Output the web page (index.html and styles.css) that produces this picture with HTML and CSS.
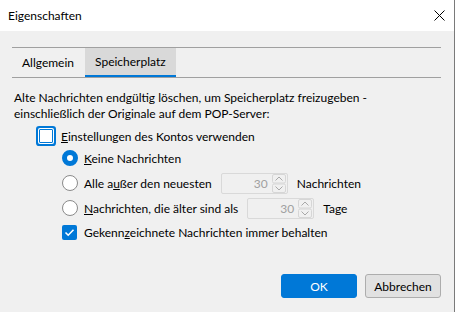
FILE: index.html
```html
<!DOCTYPE html>
<html lang="de">
<head>
    <meta charset="UTF-8">
    <title>Eigenschaften</title>
    <link rel="stylesheet" href="styles.css">
</head>
<body>
    <div class="window">
        <div class="titlebar">
            <span class="title">Eigenschaften</span>
            <svg class="close" width="11" height="11" viewBox="0 0 11 11">
                <path d="M0.5 0.5 L10.5 10.5 M10.5 0.5 L0.5 10.5" stroke="#000" stroke-width="1" fill="none"/>
            </svg>
        </div>

        <div class="content">
            <div class="tabs">
                <div class="tab">Allgemein</div>
                <div class="tab active">Speicherplatz</div>
            </div>

            <p class="desc">Alte Nachrichten endgültig löschen, um Speicherplatz freizugeben -<br>einschließlich der Originale auf dem POP-Server:</p>

            <div class="row main">
                <span class="check focus"></span>
                <span><u>E</u>instellungen des Kontos verwenden</span>
            </div>

            <div class="options">
                <div class="row">
                    <span class="radio on"></span>
                    <span><u>K</u>eine Nachrichten</span>
                </div>
                <div class="row spin-row">
                    <span class="radio"></span>
                    <span>Alle a<u>u</u>ßer den neuesten</span>
                    <span class="spin">
                        <span class="value">30</span>
                        <span class="arrows">
                            <svg width="14" height="19" viewBox="0 0 14 19">
                                <rect x="0.5" y="0.5" width="13" height="8.5" rx="1.5" fill="#f0f0f0" stroke="#d6d6d6"/>
                                <rect x="0.5" y="10" width="13" height="8.5" rx="1.5" fill="#f0f0f0" stroke="#d6d6d6"/>
                                <path d="M3.5 6.5 L7 3 L10.5 6.5" stroke="#a8a8a8" fill="none"/>
                                <path d="M3.5 12.5 L7 16 L10.5 12.5" stroke="#a8a8a8" fill="none"/>
                            </svg>
                        </span>
                    </span>
                    <span>Nachrichten</span>
                </div>
                <div class="row spin-row">
                    <span class="radio"></span>
                    <span><u>N</u>achrichten, die älter sind als</span>
                    <span class="spin">
                        <span class="value">30</span>
                        <span class="arrows">
                            <svg width="14" height="19" viewBox="0 0 14 19">
                                <rect x="0.5" y="0.5" width="13" height="8.5" rx="1.5" fill="#f0f0f0" stroke="#d6d6d6"/>
                                <rect x="0.5" y="10" width="13" height="8.5" rx="1.5" fill="#f0f0f0" stroke="#d6d6d6"/>
                                <path d="M3.5 6.5 L7 3 L10.5 6.5" stroke="#a8a8a8" fill="none"/>
                                <path d="M3.5 12.5 L7 16 L10.5 12.5" stroke="#a8a8a8" fill="none"/>
                            </svg>
                        </span>
                    </span>
                    <span>Tage</span>
                </div>
                <div class="row last">
                    <span class="check on">
                        <svg width="15" height="15" viewBox="0 0 15 15">
                            <path d="M3.5 7.5 L6.2 10.2 L11.5 4.8" stroke="#fff" stroke-width="1.6" fill="none"/>
                        </svg>
                    </span>
                    <span>Gekenn<u>z</u>eichnete Nachrichten immer behalten</span>
                </div>
            </div>

            <div class="buttons">
                <button class="btn primary">OK</button>
                <button class="btn">Abbrechen</button>
            </div>
        </div>
    </div>
</body>
</html>
```

FILE: styles.css
```css
body {
    margin: 0;
    background: #ffffff;
    font-family: Lato, "Noto Sans", sans-serif;
    font-size: 12px;
    color: #000;
}

.window {
    width: 454px;
    height: 312px;
    border-right: 1px solid #7a7a7a;
    display: flex;
    flex-direction: column;
}

.titlebar {
    height: 31px;
    background: #fff;
    display: flex;
    align-items: center;
    justify-content: space-between;
    padding: 0 9px 0 8px;
    flex-shrink: 0;
}

.close {
    margin-top: -1px;
}

.content {
    flex: 1;
    background: #f0f0f0;
    padding: 16px 13px 0 12px;
}

.tabs {
    display: flex;
    border-top: 1px solid #a0a0a0;
    border-bottom: 1px solid #a0a0a0;
}

.tab {
    height: 29px;
    line-height: 29px;
    padding: 0 10px;
    box-sizing: border-box;
}

.tab.active {
    background: #d9d9d9;
    border-bottom: 2px solid #0078d7;
    line-height: 28px;
    margin-left: 1px;
}

.desc {
    margin: 12px 0 0 2px;
    line-height: 16px;
}

.row {
    display: flex;
    align-items: center;
    height: 22px;
}

.row.main {
    margin: 3px 0 0 27px;
    gap: 8px;
}

.options {
    margin-left: 50px;
}

.options .row {
    gap: 6px;
}

.row.spin-row {
    margin-top: 3px;
}

.row.last {
    margin-top: 2px;
    gap: 7px;
}

.check {
    width: 14px;
    height: 14px;
    box-sizing: border-box;
    border: 1px solid #333;
    background: #fff;
    border-radius: 2px;
    flex-shrink: 0;
}

.check.focus {
    border-color: #0078d7;
    box-shadow: 0 0 0 1px #fff, 0 0 0 3px #0078d7;
    border-radius: 1px;
}

.check.on {
    width: 15px;
    height: 15px;
    border: none;
    background: #0078d7;
    display: flex;
}

.radio {
    width: 16px;
    height: 16px;
    box-sizing: border-box;
    border-radius: 50%;
    border: 1px solid #8a8a8a;
    background: #fff;
    flex-shrink: 0;
}

.radio.on {
    border: 5px solid #0078d7;
}

.spin {
    display: flex;
    align-items: center;
    justify-content: flex-end;
    width: 67px;
    height: 21px;
    box-sizing: border-box;
    border: 1px solid #d9d9d9;
    border-radius: 2px;
    background: #f0f0f0;
    padding-right: 1px;
    margin: 0 3px 0 3px;
}

.spin .value {
    color: #a0a0a0;
    margin-right: 4px;
}

.arrows {
    display: flex;
}

.buttons {
    display: flex;
    justify-content: flex-end;
    gap: 8px;
    margin-top: 31px;
}

.btn {
    width: 76px;
    height: 24px;
    font-family: inherit;
    font-size: 12px;
    border: 1px solid #adadad;
    border-radius: 3px;
    background: #e1e1e1;
    color: #000;
    padding: 0;
}

.btn.primary {
    background: #0078d7;
    border-color: #0078d7;
    color: #fff;
}
```
